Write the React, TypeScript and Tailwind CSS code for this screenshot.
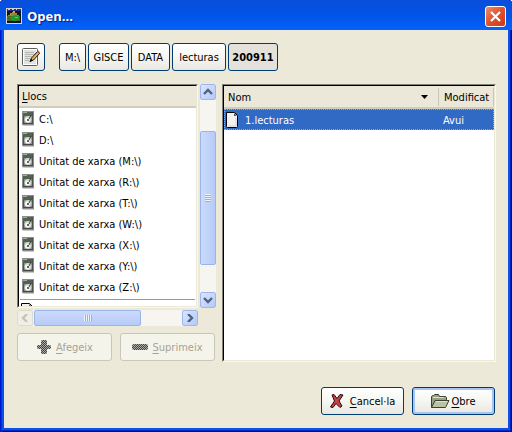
import type { ReactNode } from 'react';

const places = [
  'C:\\',
  'D:\\',
  'Unitat de xarxa (M:\\)',
  'Unitat de xarxa (R:\\)',
  'Unitat de xarxa (T:\\)',
  'Unitat de xarxa (W:\\)',
  'Unitat de xarxa (X:\\)',
  'Unitat de xarxa (Y:\\)',
  'Unitat de xarxa (Z:\\)',
];

const crumbs = [
  { name: 'M:\\', width: 'w-[27px]' },
  { name: 'GISCE', width: 'w-[41px]' },
  { name: 'DATA', width: 'w-[39px]' },
  { name: 'lecturas', width: 'w-[54px]' },
];

const buttonBase =
  'flex h-7 items-center justify-center rounded-[3px] border whitespace-nowrap';
const buttonNormal =
  'border-[#003c74] bg-linear-to-b from-white via-[#f6f6f2] to-[#e9e7df]';
const buttonDisabled = 'border-[#c9c7ba] bg-[#f5f4ea] text-[#a6a393]';

function AppIcon() {
  return (
    <svg width="16" height="16" viewBox="0 0 16 16" aria-hidden="true">
      <path fill="#d9d5c0" d="M0 0h16v16H0z" />
      <path fill="#15151c" d="M1 1h14v14H1z" />
      <path fill="#1c2f8c" d="M1 1h14v2H1z" />
      <path fill="#c9cbe0" d="M2 1h2v1H2zM6 1h2v1H6zM10 1h1v1h-1z" />
      <path fill="#8d8a3c" d="M2 7h2V5h2V4h3v1h2v2h2v3H2z" />
      <path fill="#496b28" d="M1 8h13v5H1z" />
      <path fill="#1e9b28" d="M5 9l4-2 4 1v3l-4 2-4-1z" />
      <path fill="#57d04c" d="M9 9h3v1H9z" />
      <path fill="#c8452a" d="M7 11h2v1H7zM4 9h1v1H4z" />
      <path fill="#d6a34e" d="M7 3h2v2H7zM4 6h1v1H4z" />
    </svg>
  );
}

function EditIcon() {
  return (
    <svg width="20" height="20" viewBox="0 0 20 20" aria-hidden="true">
      <rect x="1.500" y="1.500" width="15" height="17" rx="1" fill="#fff" stroke="#5c5e5a" />
      <path fill="#e2e2e0" d="M3 3h12v14H3z" />
      <path stroke="#b5b5b2" d="M4 5.500h9M4 7.500h9M4 9.500h7M4 11.500h5M4 13.500h4" />
      <path d="M9 14.500l1.500-3.500 6-6.500 2 2-6 6.500z" fill="#e3b04f" stroke="#1e1d1a" />
      <path d="M8.500 15l1.500-3.500 2 2z" fill="#111" />
      <path d="M16 4.500l1-1 2 2-1 1z" fill="#b5443c" />
    </svg>
  );
}

function DriveIcon() {
  return (
    <svg width="12" height="15" viewBox="0 0 12 15" className="shrink-0" aria-hidden="true">
      <path fill="#8b8d8a" d="M0 0h12v14H0z" />
      <path fill="#5a5d59" d="M1 1h10v4H1z" />
      <path fill="#a6a9a4" d="M1 1h4v1H1z" />
      <path fill="#4e514d" d="M10 1h1v12h-1zM1 5h1v8H1z" />
      <circle cx="6" cy="8.500" r="3.500" fill="#d3d5d2" />
      <circle cx="5.500" cy="9" r="2.300" fill="#fbfbfa" />
      <path fill="#63665f" d="M5 8h2v2H5z" />
      <path d="M2 4.500l4-1 4-2" stroke="#3f7038" fill="none" />
      <path d="M9 4L7 8" stroke="#3b3e3a" />
      <path fill="#454844" d="M1 12h10v1H1z" />
      <path fill="#c9c9c5" d="M1 14h11v1H1z" />
    </svg>
  );
}

function FileIcon() {
  return (
    <svg width="14" height="16" viewBox="0 0 14 16" className="shrink-0" aria-hidden="true">
      <path
        d="M1.500 0.500h8l3 3v11q0 1-1 1h-9q-1 0-1-1z"
        fill="#f1f1f1"
        stroke="#000"
      />
      <path d="M9 1l3 3H9z" fill="#555" />
      <path d="M3 14h8V6" stroke="#d2d2d2" fill="none" />
    </svg>
  );
}

function PlusIcon() {
  return (
    <svg width="16" height="16" viewBox="0 0 16 16" aria-hidden="true">
      <defs>
        <pattern id="plusDots" width="2" height="2" patternUnits="userSpaceOnUse">
          <path fill="#a9aaa6" d="M0 0h2v2H0z" />
          <path fill="#3f464f" d="M0 0h1v1H0zM1 1h1v1H1z" />
        </pattern>
      </defs>
      <path
        d="M6 1h4l1 1v4h3l1 1v2l-1 1h-3v4l-1 1H6l-1-1v-4H2L1 9V7l1-1h3V2z"
        fill="url(#plusDots)"
      />
    </svg>
  );
}

function MinusIcon() {
  return (
    <svg width="16" height="16" viewBox="0 0 16 16" aria-hidden="true">
      <defs>
        <pattern id="minusDots" width="2" height="2" patternUnits="userSpaceOnUse">
          <path fill="#a9aaa6" d="M0 0h2v2H0z" />
          <path fill="#3f464f" d="M0 0h1v1H0zM1 1h1v1H1z" />
        </pattern>
      </defs>
      <rect x="0" y="5" width="16" height="6" rx="2" fill="url(#minusDots)" />
    </svg>
  );
}

function CancelIcon() {
  return (
    <svg width="14" height="16" viewBox="0 0 14 16" aria-hidden="true">
      <path
        d="M2 2l2-.5 3 4 3-4 3 .5-4 6 3 5-2 1.500-4-4-3 4-2.500-.5 4-6z"
        fill="#c9404a"
        stroke="#1d0b0c"
      />
    </svg>
  );
}

function FolderIcon() {
  return (
    <svg width="20" height="16" viewBox="0 0 20 16" aria-hidden="true">
      <path
        d="M1.500 14.500V3.500l1-1h1l1-1h4l1 2h6l1 1v3"
        fill="#98a083"
        stroke="#3c4132"
      />
      <path d="M1.500 14.500L5 7.500h14l-3.500 7z" fill="#bcc3a5" stroke="#3c4132" />
      <path d="M6 8.500h11M3 4.500h11" stroke="#dde2cd" />
    </svg>
  );
}

const chevrons = {
  up: 'M1 6l4-4 4 4',
  down: 'M1 2l4 4 4-4',
  left: 'M7 0L3 4l4 4',
  right: 'M3 0l4 4-4 4',
};

function ScrollButton({
  direction,
  label,
  disabled = false,
}: {
  direction: keyof typeof chevrons;
  label: string;
  disabled?: boolean;
}) {
  return (
    <button
      type="button"
      aria-label={label}
      disabled={disabled}
      className={
        disabled
          ? 'flex size-4 shrink-0 items-center justify-center rounded-xs border border-[#dcdbd0] bg-[#f0efe6] text-[#c5c4b8]'
          : 'flex size-4 shrink-0 items-center justify-center rounded-xs border border-[#9db8ee] bg-linear-to-br from-[#dbe5fe] to-[#b4c9f8] text-[#4d6185]'
      }
    >
      <svg width="10" height="8" viewBox="0 0 10 8" aria-hidden="true">
        <path d={chevrons[direction]} fill="none" stroke="currentColor" strokeWidth="2.400" />
      </svg>
    </button>
  );
}

function Label({ accessKey, children }: { accessKey?: string; children: ReactNode }) {
  return (
    <span className="pt-0.5">
      {accessKey && <span className="underline underline-offset-2">{accessKey}</span>}
      {children}
    </span>
  );
}

const sunken =
  'border border-t-[#848278] border-l-[#848278] border-r-[#f8f7f1] border-b-[#f8f7f1]';
const sunkenInner =
  'border border-t-black border-l-black border-r-[#ece9d8] border-b-[#ece9d8] bg-white';
const headerCell = 'border-b-2 border-[#d0cdbc] bg-[#ebe8d9]';

export default function App() {
  return (
    <div className="flex min-h-screen flex-col overflow-hidden rounded-t-[4px] bg-[#0b53e6] font-['DejaVu_Sans_Condensed','DejaVu_Sans',sans-serif] text-[11px] leading-4 text-black shadow-[inset_1px_0_0_#0019cf,inset_2px_0_0_#0831d9,inset_-1px_0_0_#00138c,inset_-2px_0_0_#001dbe,inset_0_-1px_0_#00138c,inset_0_-2px_0_#0026c4]">
      <header className="flex h-[30px] items-center bg-linear-to-b from-[#0a4ddb] via-[#0054e6] to-[#0562fb] px-1.5 pt-0.5">
        <AppIcon />
        <h1 className="ml-[5px] flex-1 font-['Open_Sans','Noto_Sans',sans-serif] text-[13px] font-bold text-white [text-shadow:1px_1px_1px_#0a1883]">
          Open...
        </h1>
        <button
          type="button"
          aria-label="Tanca"
          className="flex size-[21px] items-center justify-center rounded-[3px] border border-white bg-linear-to-br from-[#ee8a68] via-[#e0502c] to-[#c83a12]"
        >
          <svg width="13" height="13" viewBox="0 0 13 13" aria-hidden="true">
            <path d="M2 2l9 9M11 2l-9 9" stroke="#fff" strokeWidth="2.200" />
          </svg>
        </button>
      </header>

      <main className="mx-1 mb-1 flex flex-1 flex-col bg-[#ece9d8] py-[13px] pr-3 pl-[13px]">
        <nav aria-label="Camí" className="flex gap-0.5">
          <button
            type="button"
            aria-label="Escriu un nom de fitxer"
            className={`${buttonBase} ${buttonNormal} mr-3 w-7`}
          >
            <EditIcon />
          </button>
          {crumbs.map(({ name, width }) => (
            <button key={name} type="button" className={`${buttonBase} ${buttonNormal} ${width}`}>
              <Label>{name}</Label>
            </button>
          ))}
          <button
            type="button"
            aria-current="location"
            className={`${buttonBase} w-[50px] border-[#003c74] bg-[#e3e1da] font-bold`}
          >
            <Label>200911</Label>
          </button>
        </nav>

        <div className="mt-[13px] flex flex-1 gap-1.5">
          <section aria-label="Llocs" className="flex w-[199px] shrink-0 flex-col">
            <div className="flex flex-1 gap-0.5">
              <div className={`flex-1 ${sunken}`}>
                <div className={`flex h-full flex-col ${sunkenInner}`}>
                  <h2 className={`flex h-[22px] items-center px-[3px] ${headerCell}`}>
                    <Label accessKey="L">locs</Label>
                  </h2>
                  <ul>
                    {places.map((place) => (
                      <li key={place} className="flex h-[21px] items-center gap-[5px] pl-[3px]">
                        <DriveIcon />
                        <Label>{place}</Label>
                      </li>
                    ))}
                  </ul>
                  <div className="mx-px mt-0.5 border-t border-[#9d9a8b]" />
                  <div className="mt-[3px] h-[3px] overflow-hidden pl-px">
                    <FileIcon />
                  </div>
                </div>
              </div>
              <div className="flex w-4 flex-col bg-[#f6f5f0]">
                <ScrollButton direction="up" label="Amunt" />
                <div className="flex-[31]" />
                <div className="flex flex-[134] flex-col items-center justify-center gap-px rounded-xs border border-[#98b4ea] bg-linear-to-r from-[#cbdafd] to-[#b7cbf8]">
                  {[0, 1, 2, 3].map((n) => (
                    <span key={n} className="h-px w-1.5 bg-[#eef4fe] shadow-[0_1px_0_#8cb0f8]" />
                  ))}
                </div>
                <div className="flex-[27]" />
                <ScrollButton direction="down" label="Avall" />
              </div>
            </div>
            <div className="mt-0.5 mr-[18px] flex h-4 bg-[#f6f5f0]">
              <ScrollButton direction="left" label="Esquerra" disabled />
              <div className="ml-px flex flex-[106] items-center justify-center gap-px rounded-xs border border-[#98b4ea] bg-linear-to-b from-[#cbdafd] to-[#b7cbf8]">
                {[0, 1, 2, 3].map((n) => (
                  <span key={n} className="h-1.5 w-px bg-[#eef4fe] shadow-[1px_0_0_#8cb0f8]" />
                ))}
              </div>
              <div className="flex-[42]" />
              <ScrollButton direction="right" label="Dreta" />
            </div>
            <div className="mt-[7px] mr-px flex gap-2">
              <button type="button" disabled className={`${buttonBase} ${buttonDisabled} w-[95px] gap-1`}>
                <PlusIcon />
                <Label accessKey="A">fegeix</Label>
              </button>
              <button type="button" disabled className={`${buttonBase} ${buttonDisabled} w-[95px] gap-1`}>
                <MinusIcon />
                <Label accessKey="S">uprimeix</Label>
              </button>
            </div>
          </section>

          <section aria-label="Fitxers" className={`-mb-px flex-1 ${sunken}`}>
            <div className={`h-full ${sunkenInner}`}>
              <table className="w-full border-separate border-spacing-0 text-left">
                <thead>
                  <tr className="h-[23px]">
                    <th className={`p-0 pl-1 font-normal ${headerCell}`} aria-sort="descending">
                      <span className="flex items-center justify-between pr-2.5">
                        <Label>Nom</Label>
                        <svg width="7" height="4" viewBox="0 0 7 4" aria-hidden="true">
                          <path d="M0 0h7L3.500 4z" />
                        </svg>
                      </span>
                    </th>
                    <th className={`w-14 p-0 font-normal ${headerCell}`}>
                      <span className="flex border-x border-[#c9c6b5] pl-[5px]">
                        <Label>Modificat</Label>
                      </span>
                    </th>
                  </tr>
                </thead>
                <tbody>
                  <tr
                    aria-selected="true"
                    className="h-[21px] bg-[#316ac5] text-white outline-1 -outline-offset-1 outline-dotted outline-[#e0a040]"
                  >
                    <td className="p-0 pl-px">
                      <span className="flex items-center gap-1.5">
                        <FileIcon />
                        <Label>1.lecturas</Label>
                      </span>
                    </td>
                    <td className="p-0 pl-[5px]">
                      <span className="flex">
                        <Label>Avui</Label>
                      </span>
                    </td>
                  </tr>
                </tbody>
              </table>
            </div>
          </section>
        </div>

        <footer className="mt-[26px] mr-px flex justify-end gap-2">
          <button type="button" className={`${buttonBase} ${buttonNormal} w-[83px] gap-1.5`}>
            <CancelIcon />
            <Label accessKey="C">ancel·la</Label>
          </button>
          <button
            type="submit"
            className={`${buttonBase} ${buttonNormal} w-[83px] gap-0.5 pr-0.5 shadow-[inset_0_0_0_2px_#a9c4f3]`}
          >
            <FolderIcon />
            <Label accessKey="O">bre</Label>
          </button>
        </footer>
      </main>
    </div>
  );
}
